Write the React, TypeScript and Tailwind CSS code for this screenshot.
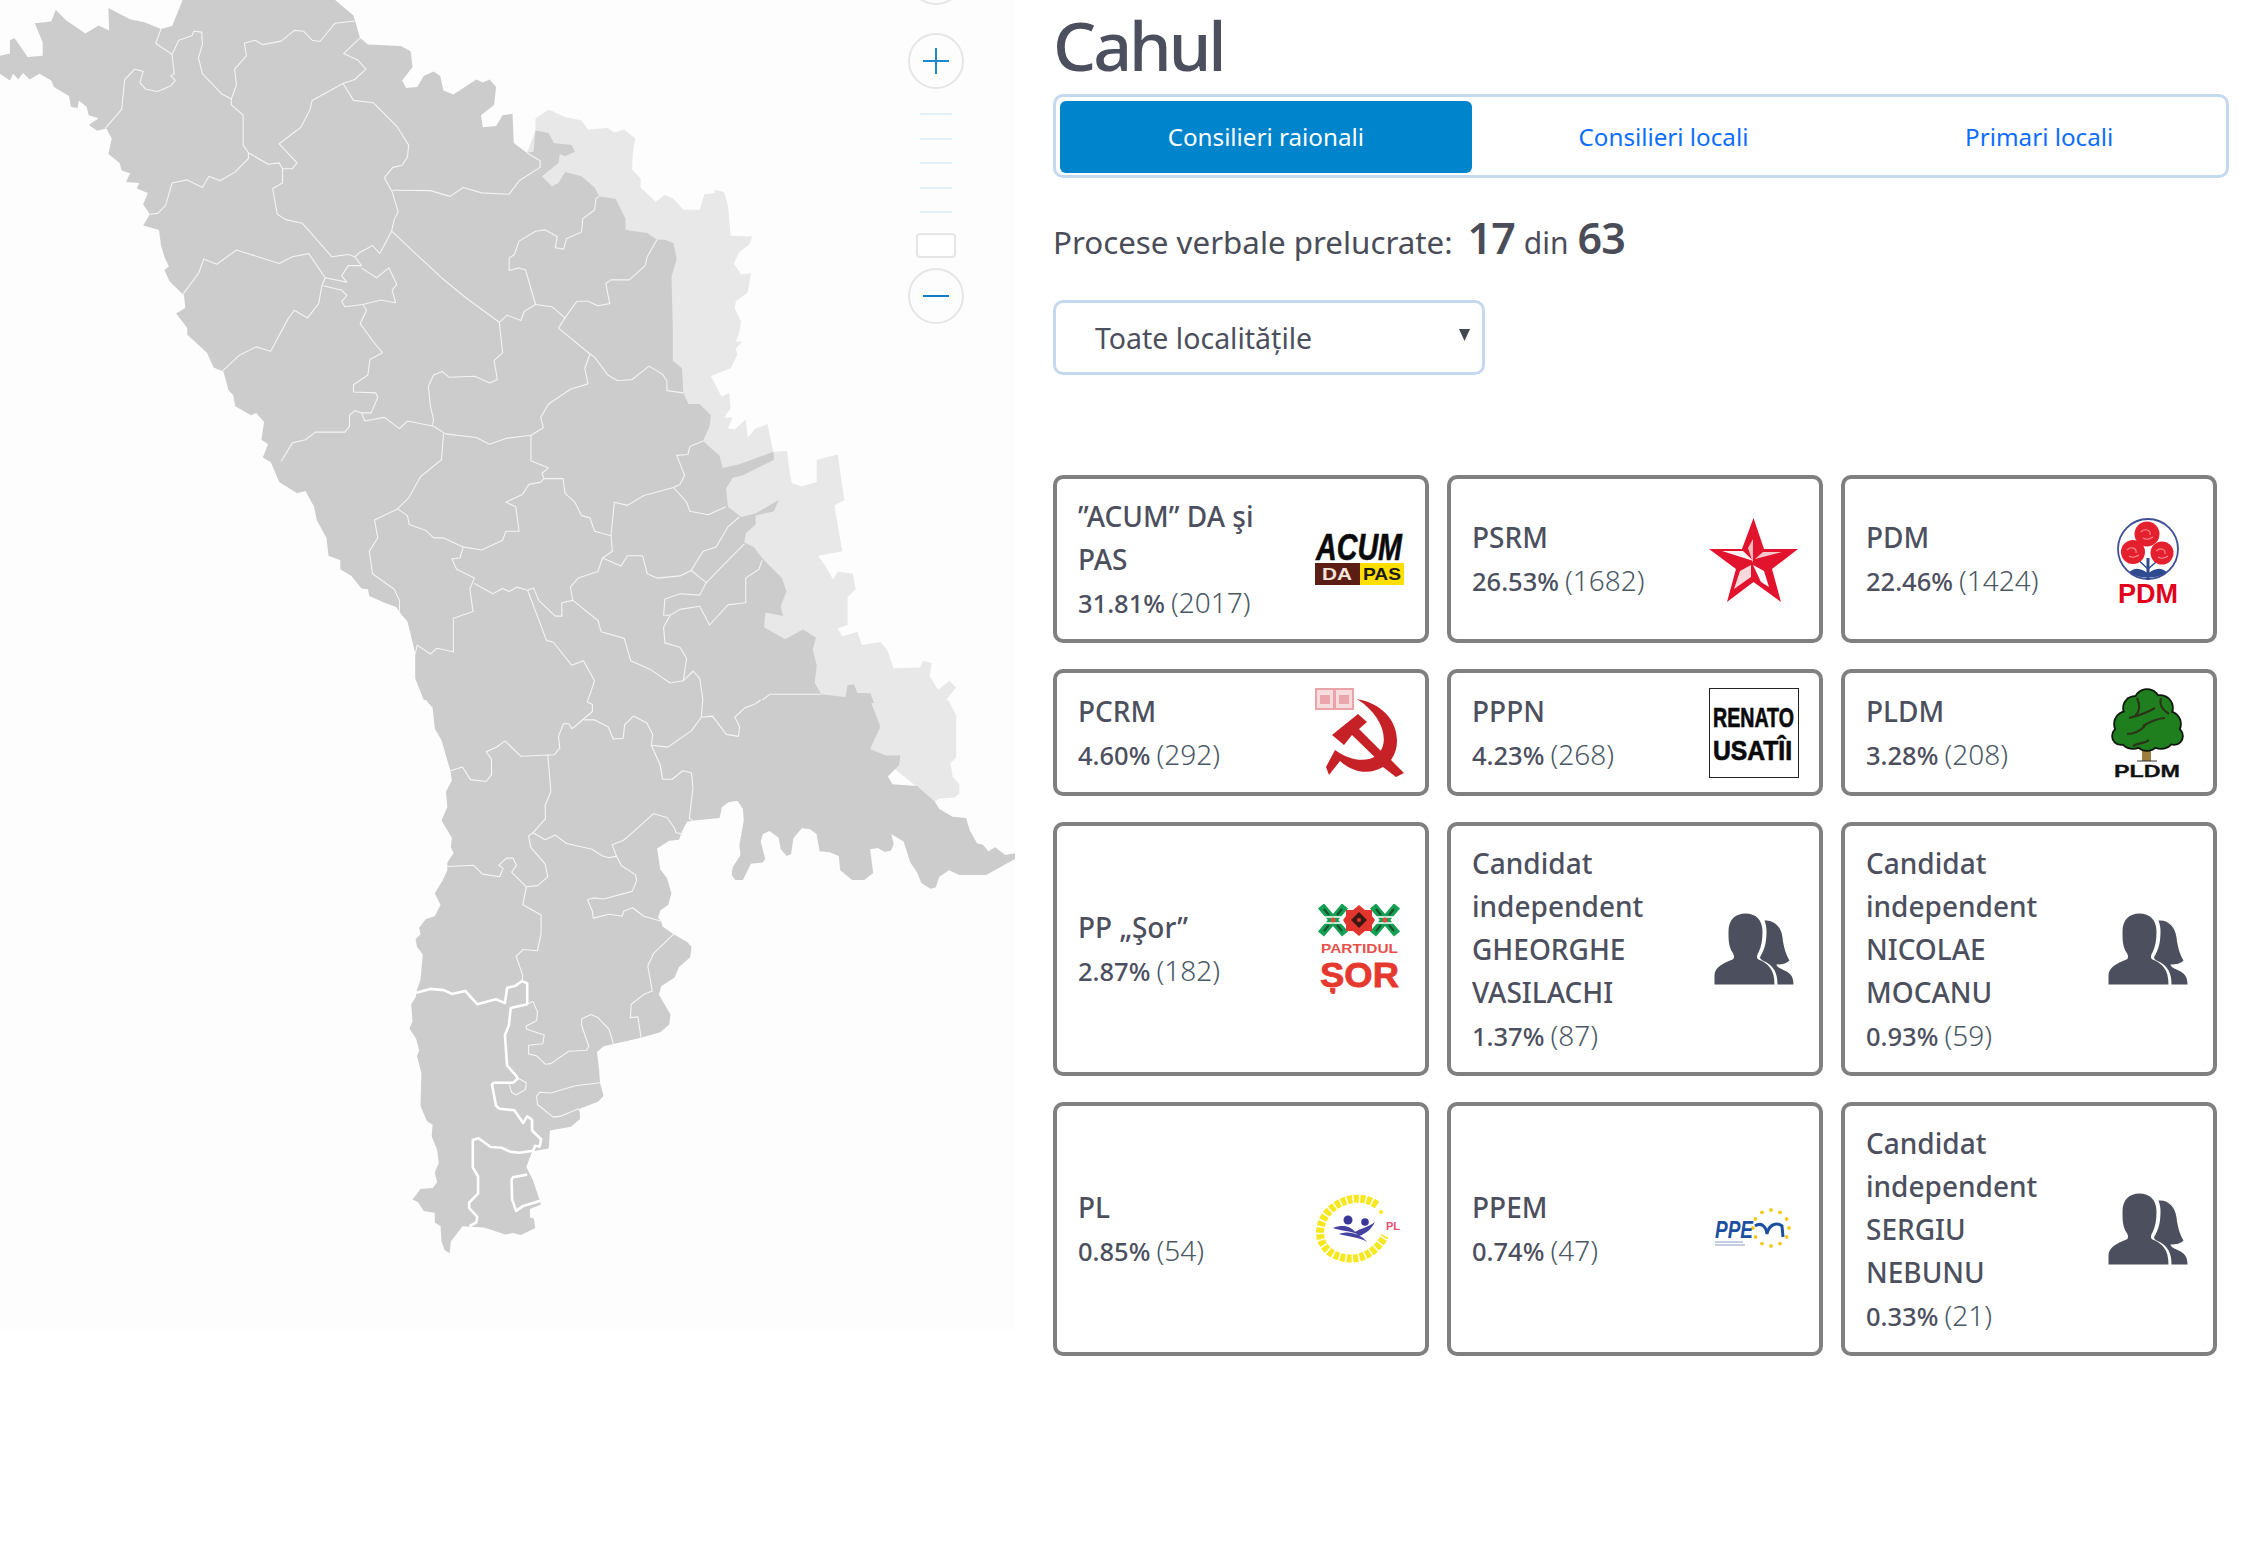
import React from "react";

type Pts = number[];

// traced from the map in two crops with different scale, so each list gets its own converter
const z5 = (p: Pts): Pts => p.map((v, i) => (i % 2 === 0 ? v / 1.522 : v / 2.24));
const z6 = (p: Pts): Pts => p.map((v, i) => (i % 2 === 0 ? 350 + v / 2.24 : 700 + v / 2.613));
const rev = (p: Pts): Pts => {
  const out: Pts = [];
  for (let i = p.length - 2; i >= 0; i -= 2) out.push(p[i], p[i + 1]);
  return out;
};
const toD = (p: Pts, close = false) => {
  let d = "";
  for (let i = 0; i < p.length; i += 2) d += (i === 0 ? "M" : "L") + p[i].toFixed(1) + " " + p[i + 1].toFixed(1);
  return d + (close ? "Z" : "");
};

const north = [278,0,510,0,538,35,548,85,560,100,610,103,625,115,628,150,612,180,618,197,635,195,645,170,660,160,670,170,675,203,690,212,725,178,735,185,745,178,755,195,752,235,732,258,735,285,755,282,765,258,780,255,782,320,802,342];
const inner = [812,340,815,292,835,298,843,320,870,325,875,340,860,350,852,345,850,365,825,395,840,418,850,410,860,385,885,395,905,420,912,440,937,445,952,490,952,515,985,522,1000,537,1012,537,1025,545,1030,580,1022,620,1024,740,1024,808,1038,825,1040,880,1048,905,1065,905,1082,930,1080,955,1070,988,1095,1020,1100,1048,1125,1040,1177,1012,1178,1030,1130,1065,1115,1070,1105,1095,1108,1135,1128,1158,1150,1150,1185,1120,1178,1145,1150,1155,1150,1175,1135,1195,1133,1215,1147,1225,1163,1255,1190,1295,1197,1325,1188,1358,1192,1380,1165,1372,1163,1405,1195,1432,1222,1410,1242,1428,1237,1455,1243,1490,1240,1530,1250,1555];
const west = [278,0,262,58,245,65,220,50,198,43,165,18,166,68,150,57,130,75,100,45,85,22,78,48,53,52,65,95,65,125,42,128,22,85,15,90,15,120,0,125,0,165,15,180,20,165,28,178,35,163,45,178,60,165,78,180,82,195,105,215,108,240,118,242,120,225,132,240,135,258,150,265,135,280,148,293,162,288,170,310,165,345,182,365,185,382,198,388,192,408,212,410,208,422,225,432,218,458,228,480,218,505,242,515,245,550,250,575,257,597,250,605,258,630,280,662,282,690,268,702,285,735,285,750,315,790,325,823,340,832,348,875,355,885,358,910,382,930,390,925,402,945,398,985,408,995,400,1025,412,1035,425,1080,445,1098,452,1105,465,1100,478,1135,482,1165,497,1205,500,1245,518,1255,518,1275,535,1290,550,1318,560,1320,562,1335,585,1350,603,1360,610,1375,620,1392,625,1420,632,1465,632,1520,645,1568];
const south = [170,0,185,20,190,75,205,105,225,185,228,210,215,240,218,280,205,315,228,360,226,385,232,400,218,425,218,445,208,470,190,505,203,535,190,565,170,572,155,595,158,612,147,625,150,645,163,665,158,730,148,765,148,775,137,795,140,840,133,858,148,885,155,915,150,930,160,975,158,1060,172,1100,185,1110,183,1140,195,1175,199,1210,190,1235,195,1260,185,1275,158,1278,150,1290,140,1305,152,1312,165,1335,190,1340,190,1365,203,1375,205,1415,212,1438,223,1445,226,1415,252,1375,300,1378,348,1397,365,1393,383,1398,415,1380,412,1355,403,1352,403,1330,428,1318,410,1255,395,1220,408,1180,445,1172,448,1125,495,1115,515,1095,515,1068,555,1050,568,1035,560,1000,558,965,553,920,568,905,650,883,695,868,715,848,718,822,692,770,697,748,727,725,737,698,762,672,765,645,755,632,725,612,700,592,697,578,690,568,695,550,713,535,720,505,710,465,695,443,688,388,715,368,737,365,745,340,755,318,770,315,828,308,833,280,848,267,868,263,880,285,882,315,872,380,875,405,857,437,855,458,863,470,880,470,898,428,925,425,930,415,920,370,925,350,940,342,960,360,965,390,978,408,988,403,993,362,1012,335,1030,337,1045,350,1052,395,1075,398,1095,408,1098,445,1125,470,1152,470,1172,452,1165,390,1182,387,1198,397,1212,393,1218,375,1212,350,1240,370,1255,425,1270,450,1280,478,1300,493,1312,490,1320,462,1342,445,1365,457,1425,457,1490,415,1490,400,1468,405,1445,385,1430,395,1418,378,1405,375,1388,340,1380,308,1350,305,1320,285,1310,265,1270,225,1215,220,1205,200,1230,170,1233,145,1200,145,1165,128,1188,70,1165,0];
const transOuter = [802,342,815,292,815,265,835,245,860,262,885,270,895,290,925,287,935,297,950,290,967,310,963,345,962,380,975,400,975,420,998,452,1012,437,1025,445,1040,470,1065,470,1072,435,1088,432,1087,425,1102,430,1108,460,1112,528,1145,530,1140,548,1125,565,1117,590,1128,615,1143,612,1138,655,1120,675,1118,690,1128,720,1125,745,1120,765,1130,765,1120,780,1122,795,1112,825,1082,842,1098,888,1110,880,1112,915,1102,935,1115,935,1108,960,1118,962,1135,940,1138,980,1150,960,1168,950,1177,1012,1198,1010,1202,1060,1205,1082,1220,1090,1243,1080,1243,1030,1275,1018,1285,1120,1270,1132,1282,1235,1245,1245,1255,1265,1268,1298,1275,1280,1298,1285,1302,1320,1290,1338,1290,1400,1275,1408,1282,1425,1305,1415,1312,1445,1340,1438,1350,1455,1360,1497,1400,1495,1405,1480,1418,1485,1415,1515,1428,1545,1445,1525,1455,1540,1440,1568];
const transSouth = [1340,0,1358,40,1358,150,1345,165,1350,200,1365,220,1365,245,1355,255,1320,258,1310,265,1165,128,1000,0];
const grayBit = [1290,1535,1300,1533,1305,1552,1325,1553,1330,1575,1285,1575];

const linesZ5: Pts[] = [
  [245,65,237,97,262,122,265,165,260,170,267,180,260,192,240,205,222,200,213,185,218,160,205,155,190,178,185,245,160,288],
  [262,122,272,90,292,80,295,70,307,72,308,100,302,130,308,165,337,210,352,222,360,190,357,155,375,125,372,97,388,90,400,100,428,92,448,68,462,70,475,90,487,93,510,52,540,47],
  [548,85,523,120,545,135,557,155,540,178,522,187,475,225,472,245,458,285,425,322,452,365,445,378,430,378,425,365,408,368,378,342,370,325,370,258,352,235,352,222],
  [378,342,378,355,358,385,335,405,318,395,308,420,285,403,262,410,252,460,240,478,228,480],
  [430,378,430,410,415,422,422,480,435,492,460,500,505,575,530,570,540,575,550,595,530,595,520,618,528,632,495,622,470,568,445,575,425,590,360,560,330,592,310,580,303,610,278,660],
  [522,187,538,225,568,230,605,285,622,325,620,352,612,370,598,375,585,398,597,430,606,475,600,492,596,518,578,568,567,550,548,565,540,575],
  [597,426,655,427,685,440,705,420,733,432,775,435,790,405,822,375,822,360,802,342],
  [596,518,672,622,710,668,760,722,772,706,793,718,798,697,815,682,800,605,790,600,775,606,775,578,783,570,790,540,815,518,830,515,848,530,845,555,858,558,862,535,885,520,887,490,905,470,907,445,912,440],
  [815,682,840,687,860,712,878,675,895,675,910,685,928,680,922,635,930,627,958,627,982,595,985,575,1000,537],
  [860,712,850,735,898,793,890,825,895,860,868,872,835,905,823,935,827,958,808,975,770,982,745,995,725,980,678,972,660,955,620,943,608,960,585,935,555,943,550,925,540,920,532,930,532,955,525,968,480,968,465,985,445,992,428,1033],
  [760,722,765,790,752,808,757,850,745,858,723,843,683,845,673,832,660,840,652,865,655,910,660,940,658,953],
  [550,925,565,925,575,890,572,880,538,878,538,862,560,840,563,805,582,790,568,765,548,725,558,695,552,682],
  [495,622,490,640,485,680,468,712,448,695,438,715,412,787,390,777,365,795,338,832],
  [492,640,520,650,528,662,520,675,525,687,552,682,580,672,602,678,597,650,604,637,592,600,573,622,550,600],
  [898,793,905,800,925,840,940,853,962,850,988,820,1008,838,1015,853,1015,875,1040,880],
  [1070,988,1050,1000,1047,1018,1030,1020,1042,1065,1035,1085,1025,1092,1045,1125,1050,1145,1078,1153,1105,1135],
  [1025,1092,980,1110,955,1132,935,1125,930,1200,905,1190,898,1160,885,1155,875,1125,860,1105,857,1072,828,1072,823,1080,805,1085,795,1108,770,1125,785,1135,790,1190,770,1190,765,1210,733,1232,705,1225,675,1205,660,1205,648,1188,623,1175,620,1155,605,1140],
  [808,975,808,1032,835,1048,825,1060,828,1072],
  [675,972,672,1030,640,1068,622,1115,605,1140,570,1165,575,1205,562,1235,567,1285,600,1320,608,1345,608,1370],
  [705,1225,700,1250,688,1252,695,1275,722,1295,715,1320,720,1370,690,1385,690,1460,665,1452,655,1465,635,1445,632,1465],
  [722,1307,750,1330,765,1318,775,1325,787,1315,803,1322,812,1317,820,1345,845,1380,855,1380,855,1350,872,1345,868,1315,880,1295,910,1280,917,1250,932,1235,930,1200],
  [917,1250,945,1268,955,1245,978,1245,985,1285,1000,1295,1035,1290,1052,1278,1075,1305,1108,1255,1133,1218],
  [1052,1278,1070,1235,1090,1225,1108,1180,1125,1158],
  [1075,1305,1065,1333,1035,1330,1012,1342,1010,1378,1020,1378,1035,1365,1065,1358,1080,1400,1108,1355,1135,1350,1135,1295,1155,1275,1160,1255],
  [872,1345,910,1390,915,1415,950,1430,960,1480,990,1500,1020,1530,1040,1525,1045,1475,1035,1450,1012,1440,1010,1405,1020,1378],
  [803,1322,832,1435,842,1438,870,1490,888,1480,905,1525,895,1568],
  [1040,1525,1055,1503,1065,1520,1070,1568],
  [1160,1568,1172,1555,1215,1555,1250,1555],
];
const linesZ6: Pts[] = [
  [225,185,252,175,270,208,305,213,317,195,317,155,305,135,330,122,347,107,383,147,458,143,470,125,467,95,478,62,490,62,497,75,505,68,543,30,543,12,532,5,532,0],
  [525,52,548,52,578,70,590,102,612,100,615,65,635,42,665,60,678,90,675,118,712,123,765,80,787,45,790,0],
  [787,45,812,42,843,90,870,95,873,70,862,45,885,20,905,12,920,0],
  [675,118,695,170,700,207,722,207,745,185,765,190,768,230,760,310,768,315],
  [443,143,450,240,437,275,438,310,410,347,400,355,405,385,437,428,443,462,420,485,395,488,362,450,373,432,365,413,350,413,333,432,343,440,335,462,297,455,277,432,218,435],
  [410,347,437,365,460,353,485,375,542,390,565,407,580,412,597,408,587,378,612,367,632,347,680,297,710,307,727,335,730,347,745,350],
  [597,408,608,433,640,457,642,473,632,500,568,520,545,517,532,522,543,552,545,570,580,560,610,565,613,552,633,543,658,565,697,578],
  [395,488,387,535,428,562,428,610,420,655,388,652,372,670,387,720,385,735],
  [725,612,680,662,667,695,677,760,660,768,630,795,628,830,645,828,652,883],
  [590,898,580,860,555,830,540,822,520,832,518,848,535,905,530,915,490,918,450,950,438,952,418,930,400,925,400,902,432,898,435,875,395,860,395,852,418,838,420,815,410,788,396,795],
  [560,1000,505,1008,450,1027,425,1025,418,1035,420,1057,455,1090,470,1088,512,1068,515,1075],
  [375,987,395,1000,393,1018,372,1032,362,1025,357,1005],
];
const thickZ6: Pts[] = [
  [148,765,180,755,210,758,228,768,258,760,285,795,327,782,347,792,352,752,370,747,385,735,397,740,397,795,360,805,356,850,347,875,352,955,373,983,375,990,365,1000,322,1000,318,1005,327,1060,335,1068,368,1072,388,1105,397,1088,408,1097,408,1125,428,1148,425,1167,415,1165,410,1178,380,1183,358,1180,340,1170,315,1168,288,1145,275,1150,275,1222,287,1245,287,1290,267,1313,267,1328,285,1350,283,1365,268,1375],
  [397,1240,365,1247,362,1255,363,1305,372,1335,388,1322,428,1308],
];

const country = [...z5(west), ...z6(south), ...rev(z5(inner)), ...rev(z5(north))];
const trans = [...z5(transOuter), ...z6(transSouth)];

const MoldovaMap = () => (
  <svg viewBox="0 0 1015 1330" className="block w-[1015px] h-[1330px]">
    <path d={toD(trans, true)} fill="#e8e8e8" />
    <path d={toD(country, true)} fill="#cccccc" />
    <path d={toD(z5(grayBit), true)} fill="#cccccc" />
    {linesZ5.map((l, i) => (
      <path key={i} d={toD(z5(l))} fill="none" stroke="#f4f4f4" strokeWidth={1.1} strokeLinejoin="round" />
    ))}
    {linesZ6.map((l, i) => (
      <path key={i} d={toD(z6(l))} fill="none" stroke="#f6f6f6" strokeWidth={1.1} strokeLinejoin="round" />
    ))}
    {thickZ6.map((l, i) => (
      <path key={i} d={toD(z6(l))} fill="none" stroke="#ffffff" strokeWidth={2.6} strokeLinejoin="round" />
    ))}
  </svg>
);

const ZoomControls = () => (
  <div className="absolute left-[908px] top-[-51px] w-[56px] flex flex-col items-center">
    <div className="w-[56px] h-[56px] rounded-full border-2 border-[#e6e6e6] bg-[#fdfdfd]" />
    <div className="relative mt-[28px] w-[56px] h-[56px] rounded-full border-2 border-[#e6e6e6] flex items-center justify-center">
      <span className="w-[26px] h-[2px] bg-[#1a8ad0]" />
      <span className="absolute w-[2px] h-[26px] bg-[#1a8ad0]" />
    </div>
    <div className="mt-[24px] w-[32px] flex flex-col gap-[22.5px]">
      {[0, 1, 2, 3, 4].map((t) => (
        <div key={t} className="h-[2px] bg-[#e4f0f9]" />
      ))}
    </div>
    <div className="mt-[20px] w-[40px] h-[25px] rounded-[4px] border-2 border-[#e6e6e6] bg-white" />
    <div className="mt-[10px] w-[56px] h-[56px] rounded-full border-2 border-[#e6e6e6] flex items-center justify-center">
      <span className="w-[26px] h-[2px] bg-[#0f80c6]" />
    </div>
  </div>
);

const logoFont = "font-['Liberation_Sans',sans-serif] font-bold";

const AcumLogo = () => (
  <svg viewBox="0 0 90 90" className="w-[90px] h-[90px] shrink-0">
    <text x="1" y="46" className={logoFont} fontStyle="italic" fontSize="37" textLength="86" lengthAdjust="spacingAndGlyphs" fill="#0a0a0a" stroke="#0a0a0a" strokeWidth="0.6">ACUM</text>
    <rect x="0" y="49" width="45" height="22" fill="#5b1d14" />
    <rect x="45" y="49" width="44" height="22" fill="#ffde00" />
    <text x="7" y="66" className={logoFont} fontSize="17" textLength="30" lengthAdjust="spacingAndGlyphs" fill="#f3e4dc">DA</text>
    <text x="48" y="66" className={logoFont} fontSize="17" textLength="38" lengthAdjust="spacingAndGlyphs" fill="#1a1a1a">PAS</text>
  </svg>
);

const StarLogo = () => (
  <svg viewBox="0 0 90 90" className="w-[90px] h-[90px] shrink-0">
    <polygon points="44.5,4 55,35 89,35 63,55 72,88 44.5,68 18,88 27,55 0,35 33,35" fill="#e1132d" />
    <polygon points="44.5,47 34,37 13,37" fill="#ffffff" opacity="0.95" />
    <polygon points="46,45 54,38 73,38" fill="#f7c9ce" />
    <polygon points="44,51 52,68 60,73 55,57" fill="#ffffff" />
    <polygon points="42,51 31,57 25,75 42,63" fill="#f9d9dc" />
    <polygon points="44,49 44,25 39,34" fill="#f5b9c0" />
  </svg>
);

const PdmLogo = () => (
  <svg viewBox="0 0 90 90" className="w-[90px] h-[90px] shrink-0">
    <circle cx="45" cy="35" r="30" fill="none" stroke="#3d4f95" strokeWidth="1.8" />
    <path d="M45 44V66M45 62C40 56 33 55 29 58C33 62 40 62 45 62M45 62C50 56 57 55 61 58C57 62 50 62 45 62" stroke="#2f4a8f" strokeWidth="3" fill="#2f4a8f" />
    <path d="M30 41L45 55M60 42L45 55" stroke="#2f4a8f" strokeWidth="1.5" />
    {[[44, 20, 12.5], [30, 38, 12], [59, 39, 11.5]].map(([x, y, r]) => (
      <g key={x}>
        <circle cx={x} cy={y} r={r} fill="#e5202e" />
        <path d={`M${x - r / 2} ${y - 2}C${x - 2} ${y - r / 2} ${x + 4} ${y - 4} ${x + 3} ${y + 1}M${x - 4} ${y + 4}C${x - 1} ${y + 6} ${x + 3} ${y + 5} ${x + 6} ${y + 3}`} stroke="#f28a8e" strokeWidth="1.1" fill="none" />
      </g>
    ))}
    <text x="15" y="89" className={logoFont} fontSize="27" textLength="60" lengthAdjust="spacingAndGlyphs" fill="#e3001b">PDM</text>
  </svg>
);

const PcrmLogo = () => (
  <svg viewBox="0 0 90 90" className="w-[90px] h-[90px] shrink-0">
    <rect x="1" y="1" width="18" height="20" fill="#f6dcdd" stroke="#eaa3a8" strokeWidth="2" />
    <rect x="20" y="1" width="18" height="20" fill="#f6dcdd" stroke="#eaa3a8" strokeWidth="2" />
    <rect x="5" y="7" width="10" height="9" fill="#e9a6ab" />
    <rect x="24" y="7" width="10" height="9" fill="#e9a6ab" />
    <path d="M42 11C65 15 82 31 82 53C82 60 80 66 76 72L89 85L81 89L68 79C55 87 38 85 25 73L14 87L11 79L20 62C35 73 52 75 62 67C75 56 70 29 42 11Z" fill="#c62127" />
    <path d="M17 47L43 26L52 34L44 41L82 79L75 84L37 47L29 57Z" fill="#c62127" />
  </svg>
);

const RenatoLogo = () => (
  <svg viewBox="0 0 90 90" className="w-[90px] h-[90px] shrink-0">
    <rect x="0.5" y="0.5" width="89" height="89" fill="#fff" stroke="#222" />
    <text x="4" y="39" className={logoFont} fontSize="28" textLength="81" lengthAdjust="spacingAndGlyphs" fill="#0a0a0a" stroke="#0a0a0a" strokeWidth="0.7">RENATO</text>
    <text x="4" y="72" className={logoFont} fontSize="28" textLength="79" lengthAdjust="spacingAndGlyphs" fill="#0a0a0a" stroke="#0a0a0a" strokeWidth="0.7">USATÎI</text>
  </svg>
);

const crown = [[44, 14, 12], [32, 20, 11], [57, 20, 12], [24, 36, 12], [65, 36, 12], [44, 36, 18], [30, 47, 13], [58, 47, 13], [18, 48, 8], [71, 48, 8], [44, 50, 12]];

const TreeLogo = () => (
  <svg viewBox="0 0 90 90" className="w-[90px] h-[90px] shrink-0">
    <path d="M39 58H48V73H39Z" fill="#9c7f3e" />
    <path d="M34 73H54" stroke="#333" />
    {crown.map(([x, y, r], i) => (
      <circle key={i} cx={x} cy={y} r={r + 1.8} fill="#0e160e" />
    ))}
    {crown.map(([x, y, r], i) => (
      <circle key={i} cx={x} cy={y} r={r} fill="#1f7f1e" />
    ))}
    <path d="M26 30C34 28 42 26 52 20M40 38C46 34 56 30 62 30M24 46C32 46 38 42 42 38M34 10C38 18 36 24 32 28M58 10C56 18 60 22 66 26M30 58C36 54 42 56 46 52" stroke="#2c3418" strokeWidth="2.2" fill="none" />
    <text x="11" y="89" className={logoFont} fontSize="16" textLength="66" lengthAdjust="spacingAndGlyphs" fill="#111" stroke="#111" strokeWidth="0.3">PLDM</text>
  </svg>
);

const SorLogo = () => (
  <svg viewBox="0 0 90 90" className="w-[90px] h-[90px] shrink-0">
    {[18, 70].map((c) => (
      <g key={c}>
        <path d={`M${c - 12} 2L${c + 12} 30M${c + 12} 2L${c - 12} 30`} stroke="#13a052" strokeWidth="8" fill="none" />
        <path d={`M${c - 9} 5L${c - 4} 11M${c + 9} 5L${c + 4} 11M${c - 9} 27L${c - 4} 21M${c + 9} 27L${c + 4} 21`} stroke="#1c4f33" strokeWidth="2" />
        <path d={`M${c - 13} 13H${c + 13}M${c - 13} 19H${c + 13}`} stroke="#ffffff" strokeWidth="1.6" />
        <circle cx={c} cy="16" r="2.5" fill="#e4483b" />
      </g>
    ))}
    <path d="M44 1L50 6L57 6L57 12L60 16L57 21L57 27L50 27L44 32L38 27L31 27L31 21L28 16L31 12L31 6L38 6Z" fill="#e2352d" />
    <path d="M44 8L52 16L44 24L36 16Z" fill="#3c1714" />
    <circle cx="44" cy="16" r="2" fill="#e2352d" />
    <text x="6" y="49" className={logoFont} fontSize="13" textLength="77" lengthAdjust="spacingAndGlyphs" fill="#e9504a">PARTIDUL</text>
    <text x="5" y="83" className={logoFont} fontSize="35" textLength="79" lengthAdjust="spacingAndGlyphs" fill="#e5392f" stroke="#e5392f" strokeWidth="0.8">ȘOR</text>
  </svg>
);

const PersonsIcon = () => (
  <svg viewBox="-5.5 -9.5 90 90" className="w-[90px] h-[90px] shrink-0">
    <path d="M0 71V62C0 54 8 50 18 46C20 45 20 42 18 39C14 33 14 26 14 18C14 6 21 0 31 0C41 0 48 6 48 18C48 26 47 33 44 39C42 42 42 45 44 46C54 50 60 56 60 71Z" fill="#4c4f5e" />
    <path d="M50 7C60 6 67 14 68 24C69 34 72 42 75 47C72 50 68 51 62 51C62 53 64 54 68 56C75 59 79 62 79 71H63C63 60 60 52 48 47C45 45 45 44 47 41C51 34 52 26 52 18C52 13 51 10 50 7Z" fill="#4c4f5e" />
  </svg>
);

const PlLogo = () => (
  <svg viewBox="0 0 90 90" className="w-[90px] h-[90px] shrink-0">
    <path d="M62 21C48 11 30 13 15 26C1 40 1 62 20 71C40 80 60 71 70 52" fill="none" stroke="#f6e71f" strokeWidth="8" strokeDasharray="5 1.5" />
    <circle cx="66" cy="28" r="2" fill="#f6e71f" />
    <circle cx="33" cy="36" r="4.5" fill="#3a3796" />
    <circle cx="50" cy="38" r="3.8" fill="#3a3796" />
    <path d="M18 44C28 40 36 42 42 50C36 47 26 47 18 44ZM24 50C34 46 46 50 52 58C44 53 34 53 24 50ZM40 48C46 44 52 44 60 38C56 46 50 50 44 52Z" fill="#4442a0" />
    <text x="71" y="46" className={logoFont} fontSize="11" fill="#e8506f">PL</text>
  </svg>
);

const PpemLogo = () => {
  const stars = Array.from({ length: 12 }, (_, i) => (i * Math.PI) / 6);
  return (
    <svg viewBox="0 0 90 90" className="w-[90px] h-[90px] shrink-0">
      {stars.map((a, i) => (
        <circle key={i} cx={62 + 18 * Math.cos(a)} cy={44 + 18 * Math.sin(a)} r="1.9" fill="#f6c91f" />
      ))}
      <text x="6" y="54" className={logoFont} fontStyle="italic" fontSize="23" textLength="38" lengthAdjust="spacingAndGlyphs" fill="#1c4fa0">PPE</text>
      <path d="M46 42C52 38 57 42 58 50M58 50C60 40 68 38 73 42L74 53" fill="none" stroke="#1c4fa0" strokeWidth="3" />
      <path d="M6 58H34M6 61H36" stroke="#c3cee2" strokeWidth="2" />
    </svg>
  );
};

type Party = {
  name: string;
  pct: string;
  count: string;
  logo: React.ReactNode;
};

const parties: Party[] = [
  { name: "”ACUM” DA şi PAS", pct: "31.81%", count: "(2017)", logo: <AcumLogo /> },
  { name: "PSRM", pct: "26.53%", count: "(1682)", logo: <StarLogo /> },
  { name: "PDM", pct: "22.46%", count: "(1424)", logo: <PdmLogo /> },
  { name: "PCRM", pct: "4.60%", count: "(292)", logo: <PcrmLogo /> },
  { name: "PPPN", pct: "4.23%", count: "(268)", logo: <RenatoLogo /> },
  { name: "PLDM", pct: "3.28%", count: "(208)", logo: <TreeLogo /> },
  { name: "PP „Şor”", pct: "2.87%", count: "(182)", logo: <SorLogo /> },
  { name: "Candidat independent GHEORGHE VASILACHI", pct: "1.37%", count: "(87)", logo: <PersonsIcon /> },
  { name: "Candidat independent NICOLAE MOCANU", pct: "0.93%", count: "(59)", logo: <PersonsIcon /> },
  { name: "PL", pct: "0.85%", count: "(54)", logo: <PlLogo /> },
  { name: "PPEM", pct: "0.74%", count: "(47)", logo: <PpemLogo /> },
  { name: "Candidat independent SERGIU NEBUNU", pct: "0.33%", count: "(21)", logo: <PersonsIcon /> },
];

const PartyCard = ({ party }: { party: Party }) => (
  <div className="flex items-center rounded-[10px] border-4 border-[#808080] bg-white pl-[21px] pr-[20px] py-[15.5px]">
    <div className="flex-1 min-w-0 pr-[26px] leading-[43px]">
      <div className="text-[28px] font-medium text-[#4c4f5e]">{party.name}</div>
      <div className="flex items-baseline gap-[6px] h-[43px]">
        <span className="text-[25.5px] font-medium text-[#4c4f5e]">{party.pct}</span>
        <span className="text-[28px] font-light text-[#4a5965]">{party.count}</span>
      </div>
    </div>
    <div className="w-[90px] h-[88px] shrink-0 flex items-center justify-center">{party.logo}</div>
  </div>
);

const App = () => {
  return (
    <div className="flex h-[1542px] w-[2259px] overflow-hidden bg-white font-['Noto_Sans',sans-serif]">
      <div className="relative w-[1015px] h-[1330px] shrink-0 bg-[#fdfdfd] overflow-hidden">
        <MoldovaMap />
        <ZoomControls />
      </div>
      <div className="pl-[38px]">
        <h1 className="h-[94px] text-[68px] tracking-[-3px] leading-[90px] font-medium text-[#4c4f5e]">Cahul</h1>
        <div className="flex w-[1176px] h-[84px] rounded-[10px] border-[3px] border-[#c5d9ee] pl-[4px] pr-[3px] pt-[4px] pb-[2px] text-[24.2px]">
          <div className="w-[412px] rounded-[6px] bg-[#0084cb] text-white flex items-center justify-center">Consilieri raionali</div>
          <div className="w-[384px] text-[#0d6efd] flex items-center justify-center">Consilieri locali</div>
          <div className="w-[368px] text-[#0d6efd] flex items-center justify-center">Primari locali</div>
        </div>
        <div className="mt-[28px] flex items-baseline h-[60px] text-[#4a4d58]">
          <span className="text-[31.3px]">Procese verbale prelucrate:</span>
          <span className="ml-[15px] text-[43px] font-semibold tracking-[-1px]">17</span>
          <span className="ml-[9px] text-[30px]">din</span>
          <span className="ml-[9px] text-[43px] font-semibold tracking-[-1px]">63</span>
        </div>
        <div className="relative mt-[34px] w-[432px] h-[75px] rounded-[10px] border-[3px] border-[#c5d9ee] pl-[39px] pt-[1px] flex items-center text-[28.5px] text-[#4c4f5e]">
          Toate localitățile
          <svg viewBox="0 0 11 12" className="absolute right-[12px] top-[26px] w-[11px] h-[12px]">
            <polygon points="0,0 11,0 5.5,12" fill="#444850" />
          </svg>
        </div>
        <div className="mt-[100px] grid grid-cols-[376px_376px_376px] gap-x-[18px] gap-y-[26px]">
          {parties.map((p) => (
            <PartyCard key={p.name} party={p} />
          ))}
        </div>
      </div>
    </div>
  );
};

export default App;
